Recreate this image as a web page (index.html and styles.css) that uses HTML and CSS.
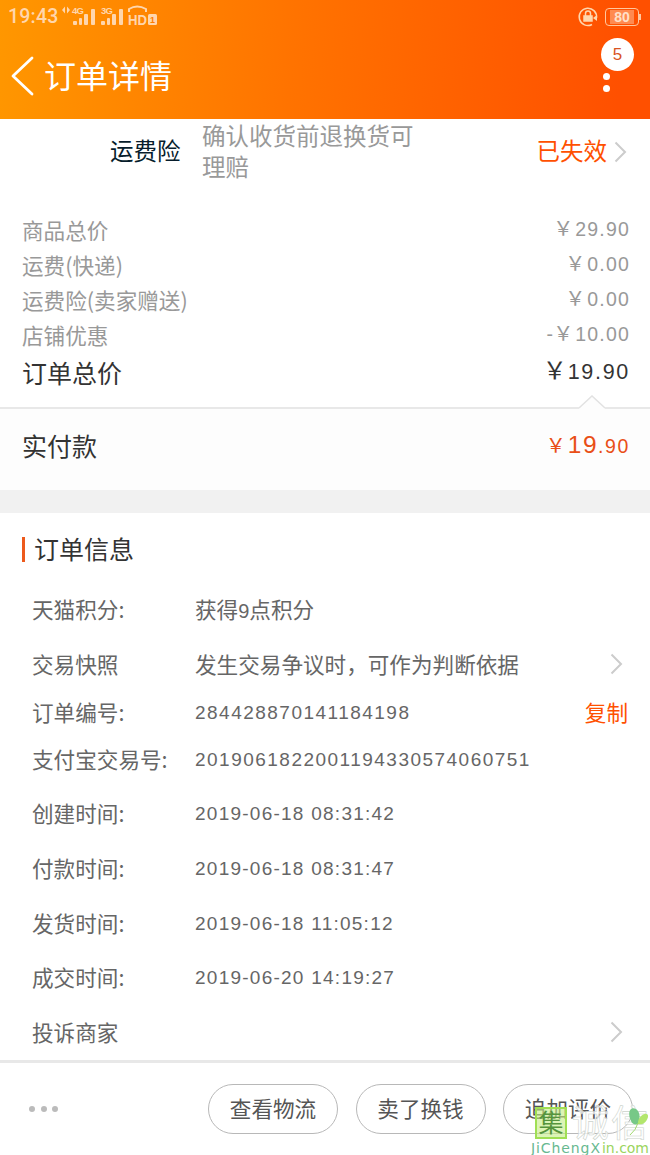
FILE: index.html
```html
<!DOCTYPE html>
<html lang="zh-CN">
<head>
<meta charset="utf-8">
<title>订单详情</title>
<link rel="stylesheet" href="styles.css">
</head>
<body>
<div class="app">
  <header class="header">
    <div class="status">
      <span class="clock">19:43</span>
      <svg class="signals" width="100" height="24" viewBox="0 0 100 24" fill="currentColor">
        <path d="M3 6.500L0 10L3 13.500ZM5 6.500L8 10L5 13.500Z"/>
        <text class="net" x="10" y="14" textLength="12">4G</text>
        <rect x="11" y="21" width="4" height="4" rx="1"/><rect x="17" y="18" width="3" height="7" rx="1"/><rect x="22" y="14" width="4" height="11" rx="1"/><rect x="29" y="9" width="4" height="16" rx="1"/>
        <text class="net" x="39" y="14" textLength="12">3G</text>
        <rect x="39" y="21" width="4" height="4" rx="1"/><rect x="45" y="18" width="3" height="7" rx="1"/><rect x="50" y="14" width="4" height="11" rx="1"/><rect x="57" y="9" width="4" height="16" rx="1"/>
        <path d="M67 12V9Q75 4 84 9V12" fill="none" stroke="currentColor" stroke-width="2"/>
        <text class="hd" x="66" y="25" textLength="19" lengthAdjust="spacingAndGlyphs">HD</text>
        <rect x="86" y="14" width="9" height="11" rx="1.500"/>
        <text class="sim" x="88" y="23">1</text>
      </svg>
      <svg class="lock" width="22" height="22" viewBox="0 0 22 22" fill="none" stroke="currentColor" stroke-width="1.500">
        <path d="M15 18.500A8.700 8.700 0 1 1 19.500 12"/><path d="M16 12L20 9V15Z" fill="currentColor" stroke="none"/>
        <path d="M8.500 10V7.500Q8.500 5 11 5T13.500 7.500V10"/><rect x="7" y="10" width="8" height="5" fill="currentColor"/>
      </svg>
      <span class="battery"><span class="level">80</span></span><span class="tip"></span>
    </div>
    <div class="nav">
      <svg width="24" height="40" viewBox="0 0 24 40" fill="none" stroke="#fff" stroke-width="2.800" stroke-linecap="round" stroke-linejoin="round"><path d="M21 2L2 20L21 38"/></svg>
      <h1 class="title">订单详情</h1>
      <div class="more"><i></i><i></i><i></i><span class="badge">5</span></div>
    </div>
  </header>

  <section class="insurance">
    <span class="ins-name">运费险</span>
    <span class="ins-desc">确认收货前退换货可理赔</span>
    <span class="ins-state">已失效</span>
    <svg class="arrow" width="13" height="22" viewBox="0 0 13 22"><path d="M1.500 1.500L11 11L1.500 20.500"/></svg>
  </section>

  <section class="prices">
    <div class="price"><span>商品总价</span><span class="amount"><b>￥</b>29.90</span></div>
    <div class="price"><span>运费(快递)</span><span class="amount"><b>￥</b>0.00</span></div>
    <div class="price"><span>运费险(卖家赠送)</span><span class="amount"><b>￥</b>0.00</span></div>
    <div class="price"><span>店铺优惠</span><span class="amount">-<b>￥</b>10.00</span></div>
    <div class="price total"><span>订单总价</span><span class="amount"><b>￥</b>19.90</span></div>
  </section>

  <section class="paid">
    <svg class="notch" width="26" height="14" viewBox="0 0 26 14"><path d="M0 13L13 1L26 13V14H0Z" fill="#fdfdfd"/><path d="M0 13L13 1L26 13" fill="none" stroke="#e2e2e2" stroke-width="1.500"/></svg>
    <span>实付款</span><span class="amount"><b>￥</b><em>19</em>.90</span>
  </section>
  <div class="gap"></div>

  <section class="info">
    <h2 class="heading">订单信息</h2>
    <div class="row"><span class="label">天猫积分:</span><span>获得<span class="digit">9</span>点积分</span></div>
    <div class="row"><span class="label">交易快照</span><span>发生交易争议时，可作为判断依据</span><svg class="arrow end" width="13" height="22" viewBox="0 0 13 22"><path d="M1.500 1.500L11 11L1.500 20.500"/></svg></div>
    <div class="row short"><span class="label">订单编号:</span><span class="num">284428870141184198</span><a class="copy">复制</a></div>
    <div class="row mid"><span class="label">支付宝交易号:</span><span class="num">2019061822001194330574060751</span></div>
    <div class="row"><span class="label">创建时间:</span><span class="num date">2019-06-18 08:31:42</span></div>
    <div class="row"><span class="label">付款时间:</span><span class="num date">2019-06-18 08:31:47</span></div>
    <div class="row"><span class="label">发货时间:</span><span class="num date">2019-06-18 11:05:12</span></div>
    <div class="row"><span class="label">成交时间:</span><span class="num date">2019-06-20 14:19:27</span></div>
    <div class="row"><span class="label">投诉商家</span><svg class="arrow end" width="13" height="22" viewBox="0 0 13 22"><path d="M1.500 1.500L11 11L1.500 20.500"/></svg></div>
  </section>

  <footer class="footer">
    <div class="dots"><i></i><i></i><i></i></div>
    <a class="button">查看物流</a>
    <a class="button">卖了换钱</a>
    <a class="button">追加评价</a>
    <div class="watermark">
      <svg width="119" height="52" viewBox="0 0 119 52">
        <rect x="5" y="3" width="30" height="30" fill="#c5ed85" fill-opacity=".6" stroke="#a0df54" stroke-width="2"/>
        <text class="seal" x="7.500" y="27">集</text>
        <text class="brand" x="41" y="32" textLength="76">诚信</text>
        <path d="M100 16C96 8 99 1 105 4C110 8 109 14 107 19C104 20 101 19 100 16Z" fill="#77c887"/><path d="M107 19C106 10 118 5 117 12C115 19 110 20 107 19Z" fill="#b2e66d"/><path d="M107 18Q105 25 99 30" fill="none" stroke="#a0d96e"/>
        <text class="site" y="48"><tspan x="0" fill="#68b990" textLength="69">JiChengX</tspan><tspan x="71" fill="#9ad45d" textLength="47">in.com</tspan></text>
      </svg>
    </div>
  </footer>
</div>
</body>
</html>
```
FILE: styles.css
```css
* { box-sizing: border-box; }
body { margin: 0; background: #fff; font-family: "Noto Sans CJK SC", sans-serif; }
i, em, b { font-style: normal; font-weight: 400; }
.app { width: 650px; height: 1155px; display: flex; flex-direction: column; overflow: hidden; }

.header { height: 119px; color: #fff; background: linear-gradient(95deg, #ff9700, #ff7300 45%, #ff5000 95%); }
.status { height: 33px; display: flex; align-items: center; padding: 0 9px 0 8px; color: #ffd6ad; }
.clock { width: 54px; font: 500 19.500px Roboto, sans-serif; letter-spacing: .2px; }
.signals { margin-top: -9px; overflow: visible; }
.net { font: 700 9.500px "Liberation Sans", sans-serif; }
.hd { font: 700 15px "Liberation Sans", sans-serif; }
.sim { font: 700 9px "Liberation Sans", sans-serif; fill: #ff7c00; }
.lock { margin-left: auto; margin-right: 6px; }
.battery { width: 34px; height: 18px; padding: 1px 4px; border: 1.500px solid #ffc79d; border-radius: 4px; }
.level { display: block; text-align: center; background: #ff8a50; color: #ffe0c8; font: 700 14px/14px "Liberation Sans", sans-serif; }
.tip { width: 2px; height: 6px; background: #ffc79d; }
.nav { height: 86px; display: flex; align-items: center; padding-left: 11px; }
.title { margin: -5px 0 0 9px; font-size: 32px; line-height: 40px; font-weight: 400; }
.more { position: relative; width: 8px; margin: 4px 39px 0 auto; display: flex; flex-direction: column; gap: 5px; }
.more i { width: 7px; height: 7px; border-radius: 50%; background: #fff; }
.more i:first-child { visibility: hidden; }
.more i:nth-child(n+2) { transform: translateY(-2px); }
.badge { position: absolute; left: -2px; top: -25px; width: 33px; height: 33px; border-radius: 50%; background: #fff; color: #d95322; text-align: center; font: 17px/33px "Liberation Sans", sans-serif; }

.insurance { height: 94px; display: flex; align-items: flex-start; padding: 1px 23px 0 110px; font-size: 23.500px; line-height: 31px; }
.ins-name { width: 92px; padding-top: 15px; color: #071d2c; }
.ins-desc { width: 214px; color: #999; }
.ins-state { margin-left: auto; padding-top: 15px; color: #ff5000; }
.insurance .arrow { margin: 21px 0 0 7px; }
.arrow { flex: none; fill: none; stroke: #ccc; stroke-width: 2; }

.prices { height: 194px; padding: 0 20px 0 22px; color: #999; }
.price { height: 35px; display: flex; justify-content: space-between; align-items: center; font-size: 21.600px; line-height: 35px; }
.price > span, .paid > span { transform: translateY(-1.500px); }
.price > .amount { transform: translateY(-1px); }
.amount { font: 19.500px/35px "Liberation Sans", "Noto Sans CJK SC", sans-serif; letter-spacing: 1.200px; }
.amount b { font-size: 20px; line-height: 1; letter-spacing: 2px; margin-left: -1px; }
.total { height: 40px; font-size: 25px; color: #333; }
.total .amount { font-size: 21.500px; letter-spacing: 1.700px; }
.total b { font-size: 24px; letter-spacing: 1px; }
.paid { position: relative; height: 83px; padding: 0 20px 7px 22px; display: flex; justify-content: space-between; align-items: center; border-top: 2px solid #e8e8e8; background: #fdfdfd; color: #333; font-size: 25px; }
.paid .amount { color: #e94f17; letter-spacing: 1.600px; }
.paid em { font-size: 24.500px; letter-spacing: 1.500px; }
.notch { position: absolute; right: 45px; top: -14px; }
.gap { height: 23px; background: #f1f1f1; }

.info { height: 547px; padding: 24px 22px 0 32px; color: #666; font-size: 21.600px; }
.heading { margin: 0 0 20px -10px; padding-left: 9px; height: 25px; border-left: 3px solid #ed5a1c; color: #333; font-size: 25px; line-height: 23px; font-weight: 400; }
.row { height: 54.800px; display: flex; align-items: center; line-height: 32px; }
.short { height: 41px; }
.mid { height: 53px; }
.label { width: 163px; white-space: nowrap; }
.num { padding-top: 2px; font: 19px/32px "Liberation Sans", sans-serif; letter-spacing: 1.480px; white-space: nowrap; }
.date { letter-spacing: 1.250px; }
.digit { font: 20px "Liberation Sans", sans-serif; }
.copy { margin-left: auto; color: #ff5000; }
.end { margin-left: auto; margin-right: 5px; }

.footer { position: relative; height: 95px; display: flex; align-items: center; gap: 17.500px; padding: 0 17px 0 29px; border-top: 3px solid #e8e8e8; }
.dots { display: flex; gap: 5.500px; margin-right: auto; }
.dots i { width: 6px; height: 6px; border-radius: 50%; background: #bbb; }
.button { width: 130px; height: 50px; border: 1px solid #b8b8b8; border-radius: 25px; text-align: center; color: #555; font-size: 21.600px; line-height: 46px; }
.watermark { position: absolute; left: 531px; top: 42px; height: 52px; }
.seal { font-size: 25px; fill: #56943d; }
.brand { font-size: 37px; fill: #fff; fill-opacity: .75; stroke: #ccd3cc; stroke-width: .6; }
.site { font: 14px "DejaVu Sans", sans-serif; }
```
